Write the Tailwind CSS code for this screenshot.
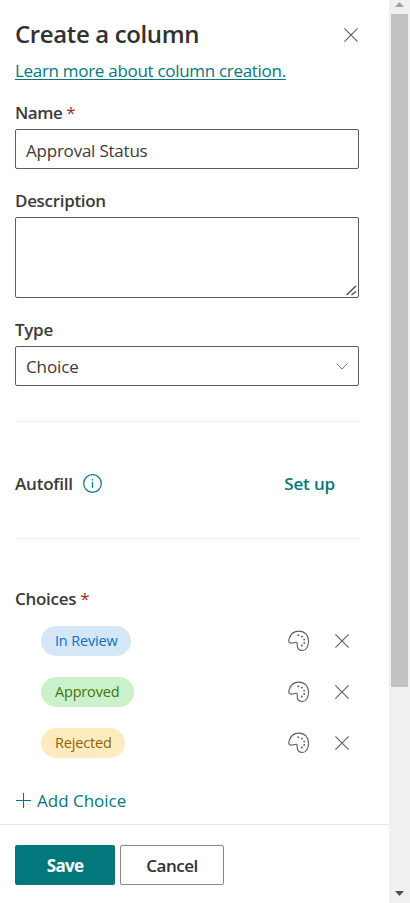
<!DOCTYPE html>
<html lang="en">
<head>
<meta charset="utf-8">
<title>Create a column</title>
<script src="https://cdn.jsdelivr.net/npm/@tailwindcss/browser@4"></script>
</head>
<body class="flex h-[903px] w-[410px] overflow-hidden bg-white font-['Open_Sans','Noto_Sans',sans-serif] text-[17px] leading-6 text-[#3b3a39]">
<svg class="hidden">
  <symbol id="palette" viewBox="0 0 22 22"><g fill="none" stroke="#605e5c" stroke-width="1.1" stroke-linejoin="round"><path d="M1.500 12.500C.6 11.700.8 9.500 1.400 8C2.900 3.600 6.500 1.100 10.900 1.100C16.800 1.100 20.500 5.500 20.500 11C20.500 16.200 18.300 20.500 14.500 20.500C11 20.500 9.200 18.300 9.200 15.300C9.200 13.600 9.600 12.200 8.300 12.200C5.800 12.200 3.700 14.300 1.500 12.500Z"/></g><g fill="#605e5c"><circle cx="10.300" cy="5.300" r=".95"/><circle cx="14" cy="6.600" r=".95"/><circle cx="16.200" cy="9.600" r=".95"/><circle cx="16.200" cy="13" r=".95"/><circle cx="13.800" cy="15.500" r=".95"/></g></symbol>
  <symbol id="cross" viewBox="0 0 14 14"><path d="M.4.400 13.600 13.600M13.600.400.400 13.600" fill="none" stroke="#605e5c" stroke-width="1.100"/></symbol>
</svg>
<main class="flex w-[389px] flex-col">
  <div class="h-[824px] pr-[30px] pl-[15px]">
    <header class="flex items-center justify-between pt-[18px]">
      <h1 class="text-[24px] leading-8 font-semibold tracking-[-0.37px] whitespace-nowrap text-[#323130]">Create a column</h1>
      <button class="mr-px pt-[2px]" aria-label="Close"><svg class="size-[14px]"><use href="#cross"/></svg></button>
    </header>
    <a class="mt-[9px] block h-6 tracking-[-0.3px] whitespace-nowrap text-[#03787c] underline decoration-1 underline-offset-2">Learn more about column creation.</a>
    <label class="mt-[18px] block h-6 font-semibold tracking-[-0.45px]">Name <span class="font-normal text-[#a4262c]">*</span></label>
    <div class="mt-[4px] flex h-10 items-center rounded-[2px] border border-[#605e5c] px-[10px] pt-[3px] tracking-[-0.22px]">Approval Status</div>
    <label class="mt-5 block h-6 font-semibold tracking-[-0.32px]">Description</label>
    <div class="mt-1 flex h-[81px] items-end justify-end rounded-[2px] border border-[#605e5c] pr-px pb-px">
      <svg class="size-[11px]" viewBox="0 0 11 11" fill="none" stroke="#505050" stroke-width="1.500"><path d="M.5 10 10 1M5.500 10 10 6.500"/></svg>
    </div>
    <label class="mt-5 block h-6 font-semibold tracking-[-0.3px]">Type</label>
    <div class="mt-1 flex h-10 items-center justify-between rounded-[2px] border border-[#605e5c] pr-[10px] pl-[10px] tracking-[-0.1px]"><span class="pt-[2px]">Choice</span><svg class="h-[7px] w-3" viewBox="0 0 12 7" fill="none" stroke="#797775"><path d="M.5.500 6 6 11.500.500"/></svg></div>
    <section class="mt-[35px] flex h-[118px] items-center border-y border-[#f0f0f0] pt-[7px]">
      <span class="font-semibold tracking-[-0.2px]">Autofill</span>
      <svg class="ml-[10px] size-[19px]" viewBox="0 0 19 19" fill="none" stroke="#03787c" stroke-width="1.200"><circle cx="9.500" cy="9.500" r="8.800"/><path d="M9.500 8v6M9.500 5v1.500"/></svg>
      <button class="mr-6 ml-auto font-semibold tracking-[-0.15px] text-[#03787c]">Set up</button>
    </section>
    <label class="mt-12 block h-6 font-semibold tracking-[-0.3px]">Choices <span class="font-normal text-[#a4262c]">*</span></label>
    <ul class="mt-[15px] flex flex-col gap-[21px] pl-[26px] text-[14.500px] tracking-[-0.18px]">
      <li class="flex h-[30px] items-center"><span class="h-[30px] w-[90px] rounded-full bg-[#d4e7f6] pl-[14px] leading-[30px] text-[#106ebe]">In Review</span><svg class="ml-auto size-[22px]"><use href="#palette"/></svg><svg class="mr-[10px] ml-[25px] size-[14px]"><use href="#cross"/></svg></li>
      <li class="flex h-[30px] items-center"><span class="h-[30px] w-[93px] rounded-full bg-[#caf0cc] pl-[14px] leading-[30px] text-[#437406]">Approved</span><svg class="ml-auto size-[22px]"><use href="#palette"/></svg><svg class="mr-[10px] ml-[25px] size-[14px]"><use href="#cross"/></svg></li>
      <li class="flex h-[30px] items-center"><span class="h-[30px] w-[84px] rounded-full bg-[#ffebc0] pl-[14px] leading-[30px] text-[#8f6200]">Rejected</span><svg class="ml-auto size-[22px]"><use href="#palette"/></svg><svg class="mr-[10px] ml-[25px] size-[14px]"><use href="#cross"/></svg></li>
    </ul>
    <button class="mt-[30px] flex h-6 items-center whitespace-nowrap text-[#03787c]"><svg class="mr-[6px] ml-[1px] size-[15px]" viewBox="0 0 15 15" stroke="#03787c" stroke-width="1.100"><path d="M0 7.500h15M7.500 0v15"/></svg><span class="pt-[2px]">Add Choice</span></button>
  </div>
  <footer class="flex h-[79px] gap-[5px] border-t border-[#e8e8e8] pt-5 pl-[15px]">
    <button class="h-10 w-[100px] rounded-[2px] bg-[#03787c] pt-[2px] font-bold tracking-[-0.7px] text-white">Save</button>
    <button class="h-10 w-[104px] rounded-[2px] border border-[#8a8886] pt-[2px] font-semibold tracking-[-0.5px] text-[#323130]">Cancel</button>
  </footer>
</main>
<aside class="flex w-[21px] flex-col items-center bg-[#f0f0f0]">
  <svg class="h-[14px] w-[9px]" viewBox="0 0 9 14"><path d="M0 7 4.500 2 9 7z" fill="#a0a0a0"/></svg>
  <div class="h-[673px] w-[17px] bg-[#c1c1c1]"></div>
  <svg class="mt-auto mb-[7px] h-[5px] w-[9px]" viewBox="0 0 9 5"><path d="M0 0h9L4.500 5z" fill="#505050"/></svg>
</aside>
</body>
</html>
